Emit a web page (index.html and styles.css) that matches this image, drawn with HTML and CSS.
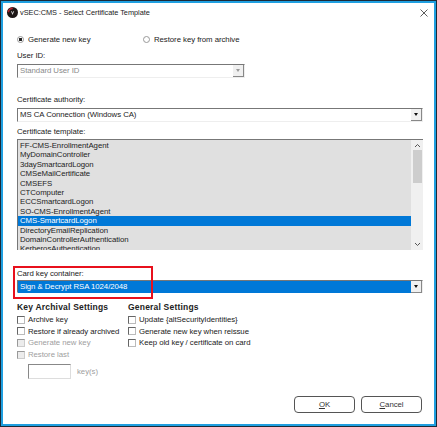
FILE: index.html
```html
<!DOCTYPE html>
<html>
<head>
    <meta charset="utf-8">
    <title>vSEC:CMS - Select Certificate Template</title>
    <link rel="stylesheet" href="styles.css">
</head>
<body>
    <div class="window">
        <div class="titlebar">
            <svg class="logo" width="11" height="11" viewBox="0 0 11 11">
                <circle cx="5.5" cy="5.5" r="5.5" fill="#1c1616"/>
                <path d="M0.6 5 A4.9 4.9 0 0 1 6 0.6 L5.6 2.2 A3.3 3.3 0 0 0 2.2 5.4 Z" fill="#b5202c"/>
                <path d="M4 4.2 L5.5 8 L7.2 4.2 L6.3 4.2 L5.5 6 L4.9 4.2 Z" fill="#d8d8d8"/>
            </svg>
            <span class="title">vSEC:CMS - Select Certificate Template</span>
            <svg class="close" width="8" height="8" viewBox="0 0 8 8">
                <path d="M0.5 0.5 L7.5 7.5 M7.5 0.5 L0.5 7.5" stroke="#333" stroke-width="0.8" fill="none"/>
            </svg>
        </div>

        <div class="radios">
            <label class="radio-item radio-first"><span class="radio checked"></span>Generate new key</label>
            <label class="radio-item"><span class="radio"></span>Restore key from archive</label>
        </div>

        <div class="label label-user">User ID:</div>
        <div class="combo combo-short combo-disabled">
            <span class="combo-text">Standard User ID</span>
            <span class="combo-btn"><i class="arrow"></i></span>
        </div>

        <div class="label label-ca">Certificate authority:</div>
        <div class="combo">
            <span class="combo-text">MS CA Connection (Windows CA)</span>
            <span class="combo-btn"><i class="arrow"></i></span>
        </div>

        <div class="label label-tpl">Certificate template:</div>
        <div class="listbox">
            <div class="list-items">
                <div class="list-item">FF-CMS-EnrollmentAgent</div>
                <div class="list-item">MyDomainController</div>
                <div class="list-item">3daySmartcardLogon</div>
                <div class="list-item">CMSeMailCertificate</div>
                <div class="list-item">CMSEFS</div>
                <div class="list-item">CTComputer</div>
                <div class="list-item">ECCSmartcardLogon</div>
                <div class="list-item">SO-CMS-EnrollmentAgent</div>
                <div class="list-item selected">CMS-SmartcardLogon</div>
                <div class="list-item">DirectoryEmailReplication</div>
                <div class="list-item">DomainControllerAuthentication</div>
                <div class="list-item">KerberosAuthentication</div>
            </div>
            <div class="scrollbar">
                <svg width="7" height="5" viewBox="0 0 7 5"><path d="M1 4 L3.5 1.5 L6 4" stroke="#555" fill="none"/></svg>
                <div class="scroll-track"><div class="scroll-thumb"></div></div>
                <svg width="7" height="5" viewBox="0 0 7 5"><path d="M1 1 L3.5 3.5 L6 1" stroke="#555" fill="none"/></svg>
            </div>
        </div>

        <div class="label label-card">Card key container:</div>
        <div class="combo combo-active">
            <span class="combo-text">Sign &amp; Decrypt RSA 1024/2048</span>
            <span class="combo-btn"><i class="arrow"></i></span>
        </div>

        <div class="settings">
            <div class="settings-col col-key">
                <div class="heading">Key Archival Settings</div>
                <label class="check-item"><span class="check"></span>Archive key</label>
                <label class="check-item"><span class="check"></span>Restore if already archived</label>
                <label class="check-item off"><span class="check"></span>Generate new key</label>
                <label class="check-item off"><span class="check"></span>Restore last</label>
                <div class="keys-row">
                    <span class="keys-input"></span>
                    <span class="keys-label">key(s)</span>
                </div>
            </div>
            <div class="settings-col">
                <div class="heading">General Settings</div>
                <label class="check-item"><span class="check"></span>Update {altSecurityIdentities}</label>
                <label class="check-item"><span class="check"></span>Generate new key when reissue</label>
                <label class="check-item"><span class="check"></span>Keep old key / certificate on card</label>
            </div>
        </div>

        <div class="buttons">
            <button type="button" class="btn"><u>O</u>K</button>
            <button type="button" class="btn"><u>C</u>ancel</button>
        </div>

        <div class="highlight"></div>
    </div>
</body>
</html>
```

FILE: styles.css
```css
html, body {
    margin: 0;
    padding: 0;
    background: #1b2a38;
}
body {
    box-sizing: border-box;
    width: 437px;
    height: 427px;
    padding: 1px;
    overflow: hidden;
    font-family: "Liberation Sans", Arial, sans-serif;
    font-size: 7.8px;
    letter-spacing: -0.05px;
    color: #222;
}
.window {
    position: relative;
    box-sizing: border-box;
    width: 435px;
    height: 425px;
    background: #fff;
    border: 2px solid #1f9fe0;
    padding: 0 12px 0 14px;
}

/* Title bar */
.titlebar {
    display: flex;
    align-items: center;
    height: 19px;
    margin-left: -10px;
    margin-right: -6px;
}
.logo {
    margin-right: 2px;
    flex: none;
}
.title {
    flex: 1;
    font-size: 7.4px;
}
.close {
    flex: none;
}

/* Radio row */
.radios {
    display: flex;
    margin-top: 12px;
    height: 10px;
    align-items: center;
}
.radio-item {
    display: flex;
    align-items: center;
}
.radio-first {
    width: 126px;
}
.radio {
    box-sizing: border-box;
    width: 7px;
    height: 7px;
    border: 1px solid #999;
    border-radius: 50%;
    margin-right: 4px;
    background: #fff;
}
.radio.checked {
    background: radial-gradient(circle, #222 0 1.4px, #fff 2px);
}

/* Labels and combos */
.label {
    height: 10px;
    line-height: 10px;
}
.label-user {
    margin-top: 7px;
}
.label-ca {
    margin-top: 17px;
}
.label-tpl {
    margin-top: 5px;
}
.label-card {
    margin-top: 19px;
}
.combo {
    display: flex;
    align-items: center;
    box-sizing: border-box;
    width: 406px;
    height: 14px;
    margin-top: 3px;
    border: 1px solid #eee;
    border-top-color: #777;
    border-left-color: #777;
    background: #fff;
}
.combo-short {
    width: 228px;
}
.combo-active {
    height: 13px;
    margin-top: 1px;
}
.combo-text {
    flex: 1;
    padding-left: 2px;
    line-height: 12px;
    white-space: nowrap;
}
.combo-disabled .combo-text {
    color: #8a8a8a;
}
.combo-active .combo-text {
    background: #0078d7;
    color: #fff;
    height: 12px;
}
.combo-btn {
    display: flex;
    align-items: center;
    justify-content: center;
    box-sizing: border-box;
    width: 11px;
    height: 12px;
    background: #f0f0f0;
    border-right: 1px solid #888;
    border-bottom: 1px solid #888;
}
.arrow {
    width: 0;
    height: 0;
    border-left: 2.5px solid transparent;
    border-right: 2.5px solid transparent;
    border-top: 3px solid #111;
}
.combo-disabled .arrow {
    border-top-color: #999;
}

/* Certificate template list */
.listbox {
    display: flex;
    box-sizing: border-box;
    width: 406px;
    height: 111px;
    margin-top: 2px;
    border-top: 1px solid #777;
    border-left: 1px solid #777;
    background: #e0e0e0;
    overflow: hidden;
}
.list-items {
    flex: 1;
    overflow: hidden;
    padding-top: 1px;
}
.list-item {
    height: 9.4px;
    line-height: 9.4px;
    padding-left: 2px;
    white-space: nowrap;
}
.list-item.selected {
    background: #0078d7;
    color: #fff;
}
.scrollbar {
    display: flex;
    flex-direction: column;
    align-items: center;
    justify-content: space-between;
    width: 12px;
    padding: 3px 0;
    box-sizing: border-box;
    background: #f0f0f0;
}
.scroll-track {
    flex: 1;
    width: 9px;
    padding-top: 2px;
}
.scroll-thumb {
    height: 33px;
    background: #cdcdcd;
}

/* Settings columns */
.settings {
    display: flex;
    margin-top: 9px;
}
.col-key {
    width: 111px;
}
.heading {
    font-size: 8.5px;
    font-weight: bold;
    letter-spacing: 0.2px;
    height: 11px;
    line-height: 11px;
    margin-bottom: 1px;
}
.check-item {
    display: flex;
    align-items: center;
    height: 11.6px;
    white-space: nowrap;
}
.check {
    box-sizing: border-box;
    width: 8px;
    height: 8px;
    margin-right: 3px;
    border: 1px solid #bbb;
    border-top-color: #666;
    border-left-color: #666;
    background: #fff;
}
.off {
    color: #a0a0a0;
}
.off .check {
    border-color: #ccc;
    border-top-color: #999;
    border-left-color: #999;
    background: #ececec;
}
.keys-row {
    display: flex;
    align-items: center;
    margin: 4px 0 0 11px;
}
.keys-input {
    box-sizing: border-box;
    width: 43px;
    height: 15px;
    margin-right: 6px;
    border: 1px solid #ddd;
    border-top-color: #888;
    border-left-color: #888;
}
.keys-label {
    color: #a0a0a0;
}

/* Buttons */
.buttons {
    position: absolute;
    right: 12px;
    bottom: 11px;
    display: flex;
    gap: 6px;
}
.btn {
    width: 61px;
    height: 17px;
    padding: 0;
    font: inherit;
    letter-spacing: inherit;
    color: #333;
    background: #fff;
    border: 1px solid #555;
    border-radius: 4px;
}

/* Red annotation over the card key container */
.highlight {
    position: absolute;
    left: 10px;
    top: 263px;
    width: 136px;
    height: 29px;
    border: 2px solid #e8101c;
}
```
